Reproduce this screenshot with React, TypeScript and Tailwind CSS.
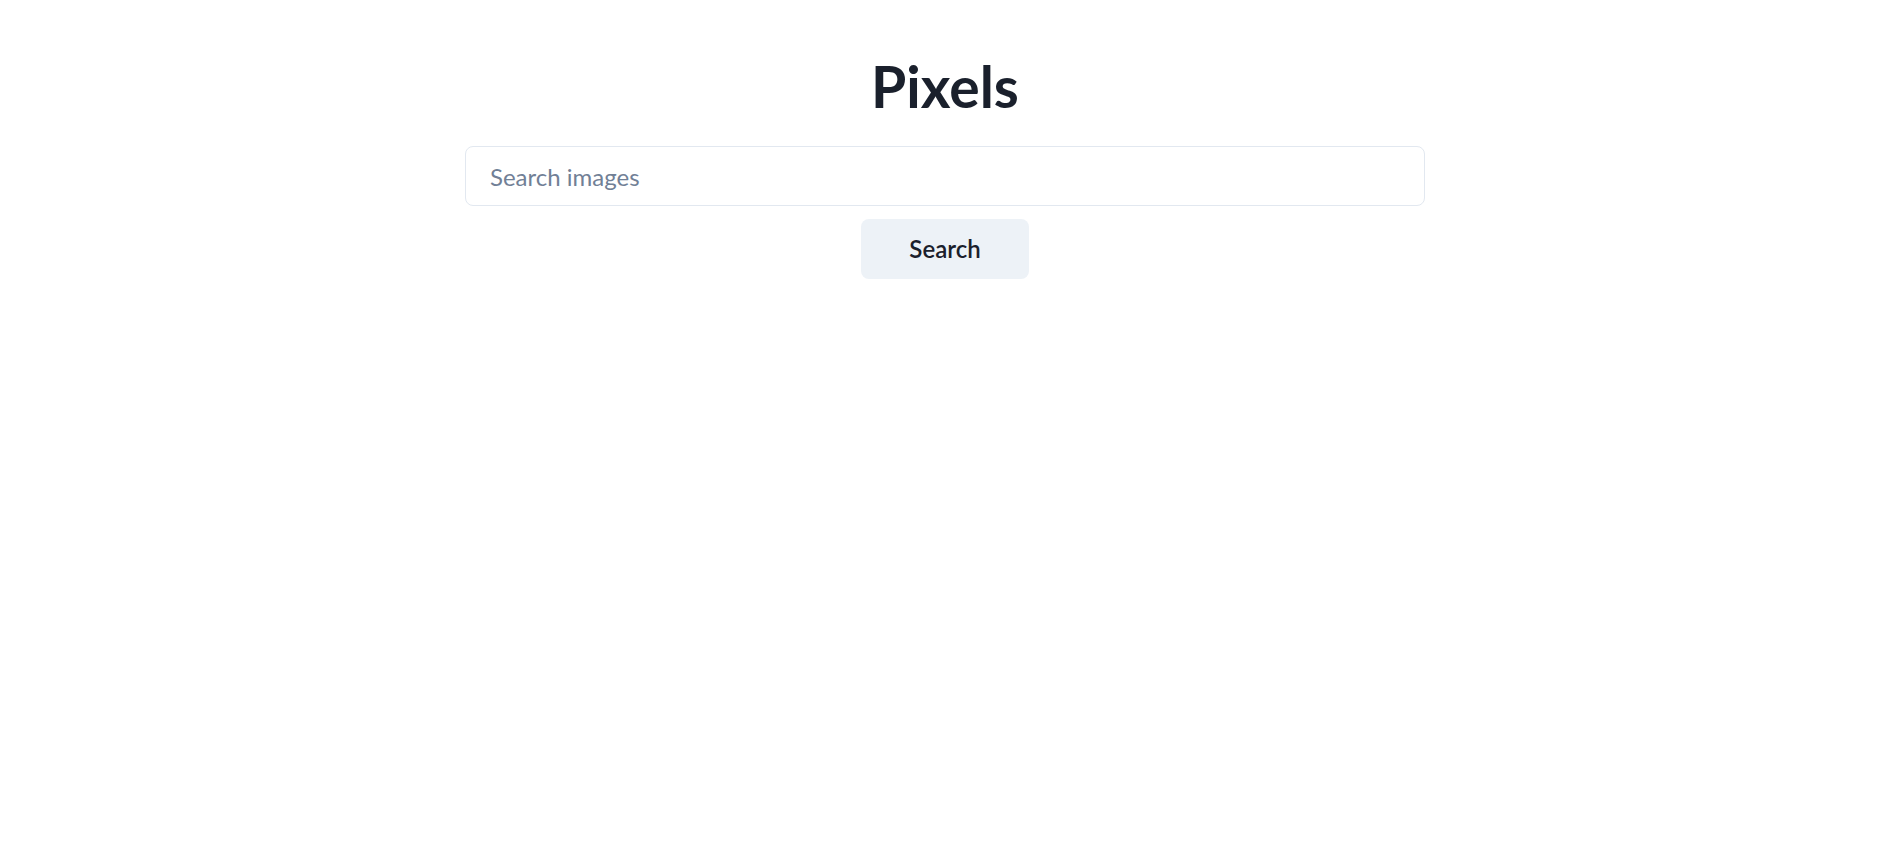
import { useState } from "react";

export default function App() {
  const [query, setQuery] = useState("");

  return (
    <div className="min-h-screen w-full bg-white font-['Lato','Liberation_Sans',sans-serif] text-[#1a202c]">
      <div className="flex flex-col items-center pt-[52px] pl-[8px]">
        <h1 className="text-[57px] font-bold leading-[1.2]">Pixels</h1>
        <form
          className="mt-[26px] flex w-[960px] flex-col items-center"
          onSubmit={(e) => e.preventDefault()}
        >
          <input
            value={query}
            onChange={(e) => setQuery(e.target.value)}
            placeholder="Search images"
            className="h-[60px] w-full rounded-[8px] border border-[#e2e8f0] bg-white px-[24px] text-[24px] text-[#1a202c] placeholder:text-[#718096] outline-none"
          />
          <button
            type="submit"
            className="mt-[13px] h-[60px] w-[168px] rounded-[8px] bg-[#edf2f7] text-[24px] font-semibold text-[#1a202c]"
          >
            Search
          </button>
        </form>
      </div>
    </div>
  );
}
